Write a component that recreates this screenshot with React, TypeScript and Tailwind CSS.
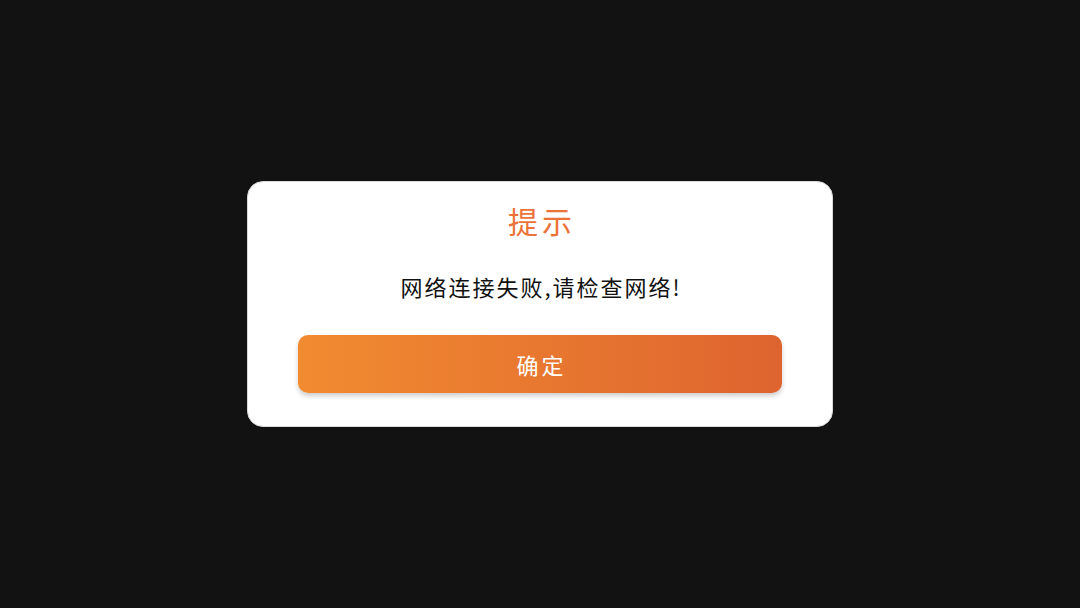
export default function App() {
  return (
    <div className="w-full h-[608px] bg-[#121212] flex items-center justify-center font-['Noto_Sans_CJK_SC',sans-serif]">
      <div className="w-[586px] h-[246px] bg-white rounded-[16px] border border-[#d9d9d9] flex flex-col items-center px-[50px] pt-[18px] pb-[33px]">
        <h1 className="text-[30px] leading-[40px] tracking-[4px] pl-[4px] text-[#ec7238]">提示</h1>
        <p className="mt-[31px] text-[22px] leading-[30px] tracking-[2px] pl-[2px] text-[#111]">网络连接失败,请检查网络!</p>
        <button className="mt-[34px] w-full h-[59px] rounded-[10px] bg-gradient-to-r from-[#f18b30] to-[#de642f] shadow-[0_3px_5px_rgba(0,0,0,0.2)] text-white text-[22px] tracking-[3px] pl-[3px]">
          确定
        </button>
      </div>
    </div>
  );
}
